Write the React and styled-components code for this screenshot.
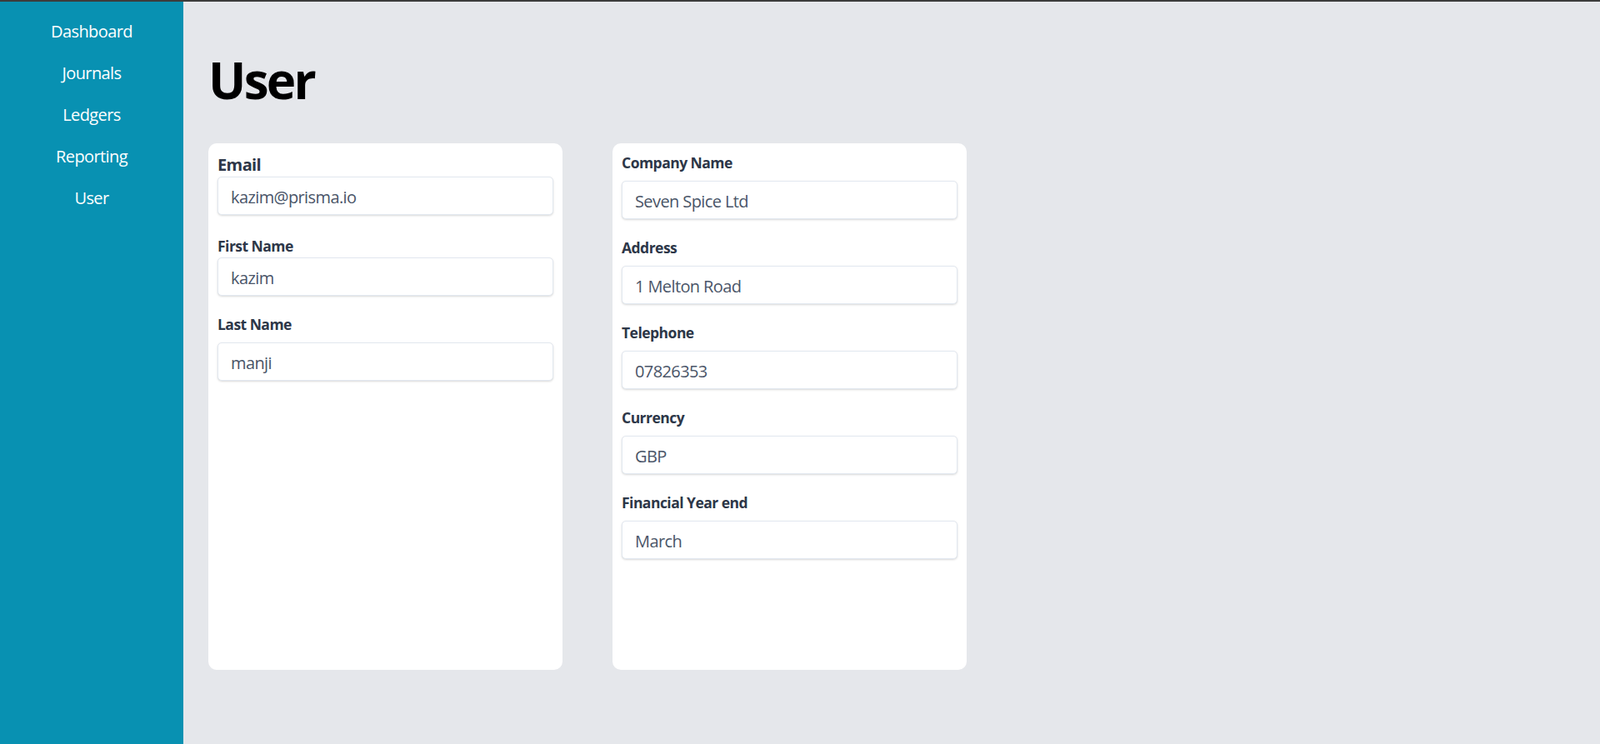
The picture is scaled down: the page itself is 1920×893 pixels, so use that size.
import styled, { createGlobalStyle } from 'styled-components';

const GlobalStyle = createGlobalStyle`
  html, body {
    margin: 0;
    padding: 0;
    background: #e5e7eb;
    font-family: "Open Sans", "Noto Sans", sans-serif;
  }
  * {
    box-sizing: border-box;
  }
`;

const TopEdge = styled.div`
  height: 2px;
  background: #3c3c3c;
`;

const Layout = styled.div`
  display: flex;
  min-height: 891px;
`;

const Sidebar = styled.nav`
  width: 220px;
  flex-shrink: 0;
  background: #0891b2;
  padding-top: 11px;
  display: flex;
  flex-direction: column;
  align-items: center;
`;

const NavItem = styled.a`
  color: #ffffff;
  font-size: 20px;
  line-height: 30px;
  letter-spacing: -0.03em;
  padding: 10px 0;
  text-decoration: none;
  cursor: pointer;
`;

const Main = styled.main`
  flex-grow: 1;
  padding: 64px 30px 0 30px;
`;

const Title = styled.h1`
  margin: 0 0 46px 0;
  font-size: 60px;
  line-height: 60px;
  font-weight: 700;
  letter-spacing: -0.045em;
  color: #000000;
`;

const Cards = styled.div`
  display: flex;
  gap: 60px;
  align-items: flex-start;
`;

const Card = styled.section`
  width: 425px;
  height: 632px;
  background: #ffffff;
  border-radius: 10px;
  padding: 10px 11px;
`;

const Field = styled.div`
  margin-bottom: ${({ $after }) => $after}px;
`;

const Label = styled.label`
  display: block;
  padding-top: 1px;
  font-size: ${({ $big }) => ($big ? '20px' : '17.5px')};
  line-height: ${({ $big }) => ($big ? '29px' : '24px')};
  font-weight: 700;
  letter-spacing: -0.03em;
  color: #2d3748;
  margin-bottom: ${({ $gap }) => $gap}px;
`;

const Input = styled.input`
  display: block;
  width: 100%;
  height: 46px;
  padding: 2px 15px 0 15px;
  font-family: inherit;
  font-size: 20px;
  letter-spacing: -0.03em;
  color: #4a5568;
  background: #ffffff;
  border: 1px solid #e2e8f0;
  border-radius: 5px;
  box-shadow: 0 1px 3px 0 rgba(0, 0, 0, 0.1), 0 1px 2px 0 rgba(0, 0, 0, 0.06);
  outline: none;
`;

const navLinks = ['Dashboard', 'Journals', 'Ledgers', 'Reporting', 'User'];

const userFields = [
  { label: 'Email', value: 'kazim@prisma.io', big: true, gap: 0, after: 24 },
  { label: 'First Name', value: 'kazim', gap: 2, after: 21 },
  { label: 'Last Name', value: 'manji', gap: 10, after: 0 },
];

const companyFields = [
  { label: 'Company Name', value: 'Seven Spice Ltd' },
  { label: 'Address', value: '1 Melton Road' },
  { label: 'Telephone', value: '07826353' },
  { label: 'Currency', value: 'GBP' },
  { label: 'Financial Year end', value: 'March' },
];

const App = () => {
  return (
    <>
      <GlobalStyle />
      <TopEdge />
      <Layout>
        <Sidebar>
          {navLinks.map(link => (
            <NavItem key={link}>{link}</NavItem>
          ))}
        </Sidebar>
        <Main>
          <Title>User</Title>
          <Cards>
            <Card>
              {userFields.map(f => (
                <Field key={f.label} $after={f.after}>
                  <Label $big={f.big} $gap={f.gap}>{f.label}</Label>
                  <Input type="text" defaultValue={f.value} />
                </Field>
              ))}
            </Card>
            <Card>
              {companyFields.map(f => (
                <Field key={f.label} $after={21}>
                  <Label $gap={10}>{f.label}</Label>
                  <Input type="text" defaultValue={f.value} />
                </Field>
              ))}
            </Card>
          </Cards>
        </Main>
      </Layout>
    </>
  );
};

export default App;
